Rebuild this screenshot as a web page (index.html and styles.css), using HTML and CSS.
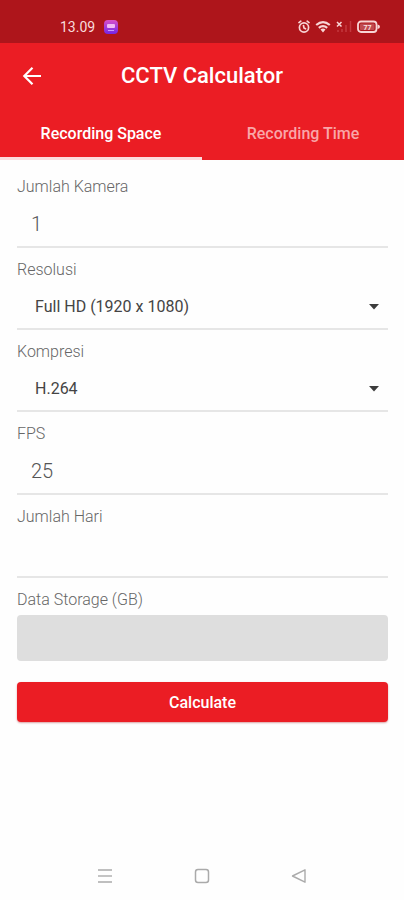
FILE: index.html
```html
<!DOCTYPE html>
<html lang="id">
<head>
<meta charset="utf-8">
<meta name="viewport" content="width=device-width, initial-scale=1">
<title>CCTV Calculator</title>
<link rel="stylesheet" href="styles.css">
</head>
<body>
<div class="statusbar">
  <div class="status-left">
    <span>13.09</span>
    <svg class="app-badge" width="14" height="14" viewBox="0 0 14 14" aria-hidden="true">
      <defs><linearGradient id="badge" x1="0" y1="0" x2="0" y2="1"><stop offset="0" stop-color="#d94fc8"/><stop offset="1" stop-color="#7426e6"/></linearGradient></defs>
      <rect width="14" height="14" rx="4" fill="url(#badge)"/>
      <rect x="3" y="4" width="8" height="4" rx="1" fill="#f3b8f4"/>
      <path d="M4 10.5h6" stroke="#c79bff" stroke-width="1"/>
    </svg>
  </div>
  <div class="status-right">
    <svg width="12" height="14" viewBox="0 0 12 14" fill="none" stroke="#f8d5d5" stroke-width="1.7" stroke-linecap="round" aria-hidden="true">
      <circle cx="6" cy="7.5" r="4.6"/><path d="M1 2.6 2.8 1.2M11 2.6 9.2 1.2M5.5 5.5 6 8l1.5.8"/>
    </svg>
    <svg width="16" height="14" viewBox="0 0 16 14" fill="none" stroke="#f8d5d5" stroke-width="2.2" aria-hidden="true">
      <path d="M1.2 5Q8-.6 14.8 5M3.8 7.8Q8 4.4 12.2 7.8"/><path d="M5.5 9.4Q8 7.700 10.5 9.4L8 12.5z" fill="#f8d5d5" stroke="none"/>
    </svg>
    <svg width="16" height="14" viewBox="0 0 16 14" fill="none" stroke-width="1.5" aria-hidden="true">
      <path d="M1 2l4.500 4.500M5.500 2l-4.500 4.500" stroke="#f8d5d5"/><path d="M2 10v2M6 9v3M10 5v7M14.5 1v11" stroke="#c4393f"/>
    </svg>
    <svg width="23" height="14" viewBox="0 0 23 14" aria-hidden="true">
      <rect x="1" y="1.5" width="18.5" height="10.5" rx="3" fill="none" stroke="#f8d5d5" stroke-width="1.8"/>
      <path d="M20.5 4.5Q23 5 23 6.8T20.5 9z" fill="#f8d5d5"/>
      <rect x="3" y="3.5" width="14.5" height="6.5" rx="1" fill="#c04a50"/>
      <text class="battery-text" x="10.5" y="9.5">77</text>
    </svg>
  </div>
</div>
<header class="appbar">
  <div class="toolbar">
    <button class="back" type="button" aria-label="Kembali">
      <svg width="20" height="20" viewBox="0 0 20 20" fill="none" stroke="#fff" stroke-width="2.2" aria-hidden="true"><path d="M19 10H2.5M10.5 1.8 2.3 10l8.2 8.2"/></svg>
    </button>
    <h1>CCTV Calculator</h1>
  </div>
  <nav class="tabs">
    <a class="tab active" href="#space">Recording Space</a>
    <a class="tab" href="#time">Recording Time</a>
  </nav>
</header>
<main>
  <form class="form" id="space">
    <div class="field"><label for="kamera">Jumlah Kamera</label><input id="kamera" type="text" inputmode="numeric" value="1"></div>
    <div class="field"><label for="resolusi">Resolusi</label>
      <div class="select"><select id="resolusi"><option>Full HD (1920 x 1080)</option></select><svg width="10" height="6" viewBox="0 0 10 6" aria-hidden="true"><path d="M0 0h10L5 5.5z" fill="#3c3c3c"/></svg></div></div>
    <div class="field"><label for="kompresi">Kompresi</label>
      <div class="select"><select id="kompresi"><option>H.264</option></select><svg width="10" height="6" viewBox="0 0 10 6" aria-hidden="true"><path d="M0 0h10L5 5.5z" fill="#3c3c3c"/></svg></div></div>
    <div class="field"><label for="fps">FPS</label><input id="fps" type="text" inputmode="numeric" value="25"></div>
    <div class="field"><label for="hari">Jumlah Hari</label><input id="hari" type="text" inputmode="numeric"></div>
    <div class="field result"><label for="storage">Data Storage (GB)</label><input id="storage" type="text" readonly></div>
    <button class="submit" type="button">Calculate</button>
  </form>
</main>
<footer class="navbar">
  <button type="button" aria-label="Menu"><svg width="16" height="16" viewBox="0 0 16 16" fill="none" stroke="#aaa" stroke-width="1.5" aria-hidden="true"><path d="M1 2h14M1 14h14"/><path d="M1 8h14" stroke="#c4c4c4" stroke-width="2"/></svg></button>
  <button type="button" aria-label="Beranda"><svg width="16" height="16" viewBox="0 0 16 16" fill="none" stroke="#aaa" stroke-width="1.5" aria-hidden="true"><rect x="1.5" y="1.5" width="13" height="13" rx="2.5"/></svg></button>
  <button type="button" aria-label="Kembali"><svg width="16" height="16" viewBox="0 0 16 16" fill="none" stroke="#aaa" stroke-width="1.4" stroke-linejoin="round" aria-hidden="true"><path d="M14 1.8v12.4L1.5 8z"/></svg></button>
</footer>
</body>
</html>
```
FILE: styles.css
```css
* { box-sizing: border-box; }
body {
  margin: 0;
  min-height: 100vh;
  display: flex;
  flex-direction: column;
  background: #fefefe;
  font-family: Roboto, "Liberation Sans", sans-serif;
}
button, input, select { font: inherit; border: 0; border-radius: 0; margin: 0; padding: 0; background: none; outline: 0; }
svg { display: block; }

.statusbar {
  height: 43px;
  padding: 10px 24px 0 60px;
  display: flex;
  align-items: center;
  justify-content: space-between;
  background: #ae151b;
  color: #f8dcdc;
  font-size: 14px;
}
.status-left { display: flex; align-items: center; gap: 9px; }
.status-right { display: flex; align-items: center; gap: 5px; }
.battery-text { font-size: 7px; font-weight: 700; fill: #fbe4e4; text-anchor: middle; }

.appbar { background: #eb1d24; color: #fff; }
.toolbar {
  height: 66px;
  padding: 0 22px;
  display: grid;
  grid-template-columns: 20px 1fr 20px;
  align-items: center;
}
.back { width: 20px; height: 20px; }
h1 { margin: 0; font-size: 22px; line-height: 28px; font-weight: 500; text-align: center; }
.tabs { display: grid; grid-template-columns: 1fr 1fr; }
.tab {
  height: 51px;
  border-bottom: 3px solid transparent;
  display: flex;
  align-items: center;
  justify-content: center;
  color: #f9a6a8;
  font-size: 16px;
  font-weight: 500;
  text-decoration: none;
}
.tab.active { color: #fff; border-color: #fcdcdd; }

main { flex: 1; }
.form { padding: 17px 16px 0 17px; display: flex; flex-direction: column; gap: 12px; }
.field { display: flex; flex-direction: column; }
label { font-size: 16px; line-height: 20px; font-weight: 300; color: #666; }
.field input {
  width: 100%;
  height: 51px;
  padding: 4px 14px 0;
  border-bottom: 2px solid #e6e6e6;
  font-size: 20px;
  font-weight: 300;
  color: #555;
}
.select { display: grid; align-items: center; }
.select select, .select svg { grid-area: 1 / 1; }
.select select {
  appearance: none;
  width: 100%;
  height: 50px;
  padding: 4px 32px 0 18px;
  border-bottom: 2px solid #e6e6e6;
  font-size: 16px;
  color: #444;
}
.select svg { justify-self: end; margin: 3px 9px 0 0; pointer-events: none; }
.result { gap: 5px; }
.field.result input { height: 46px; border: 0; border-radius: 4px; background: #dedede; }
.submit {
  height: 40px;
  margin-top: 9px;
  border-radius: 4px;
  background: #eb1d24;
  box-shadow: 0 1px 2px #d9a0a2;
  color: #fff;
  font-size: 16px;
  font-weight: 500;
}

.navbar { height: 48px; padding: 0 57px; display: grid; grid-template-columns: repeat(3, 1fr); }
.navbar button { display: flex; align-items: center; justify-content: center; }
```
